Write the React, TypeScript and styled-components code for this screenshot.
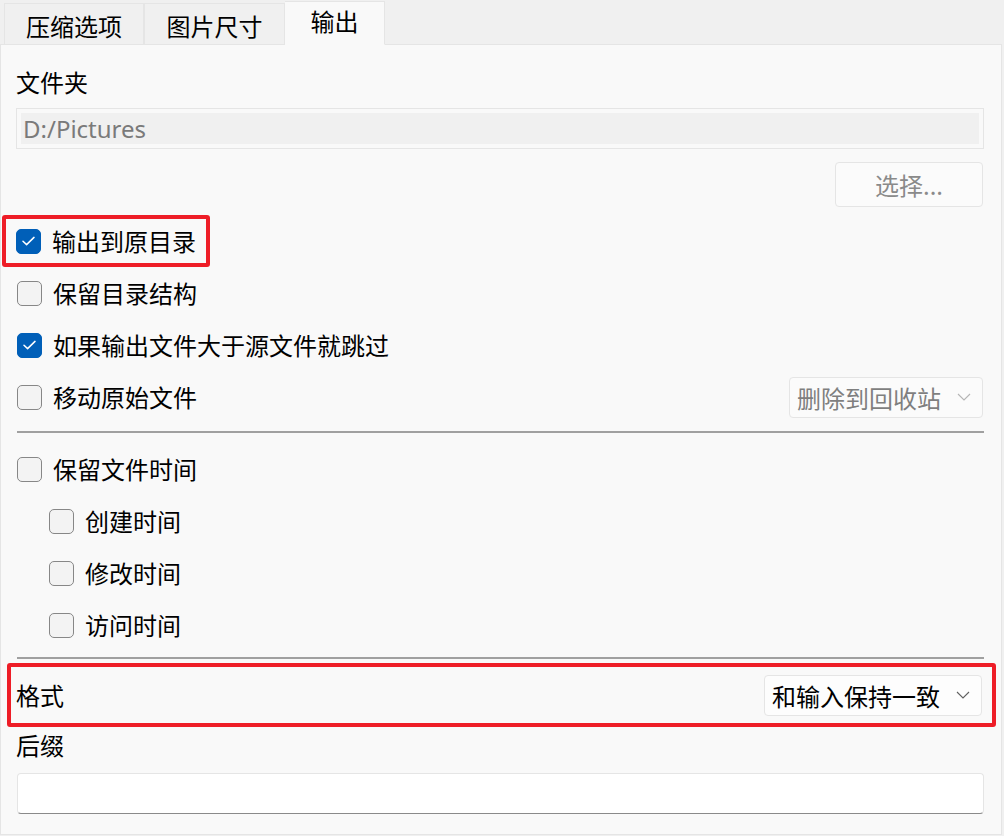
import React from 'react';
import styled, { createGlobalStyle } from 'styled-components';

const GlobalStyle = createGlobalStyle`
  html, body {
    margin: 0;
    padding: 0;
    background: #f0f0f0;
  }
  body {
    font-family: "Noto Sans", "Noto Sans CJK SC", sans-serif;
    color: #000;
  }
`;

const Window = styled.div`
  width: 1004px;
  height: 836px;
  display: flex;
  flex-direction: column;
  background: #f0f0f0;
  font-family: "Noto Sans CJK SC", "Noto Sans", sans-serif;
`;

const TabBar = styled.div`
  display: flex;
  align-items: flex-end;
  height: 44px;
  padding-left: 4px;
  position: relative;
  z-index: 1;
`;

const Tab = styled.div<{ $active?: boolean; $width: number }>`
  box-sizing: border-box;
  width: ${(p) => p.$width}px;
  height: ${(p) => (p.$active ? 44 : 41)}px;
  display: flex;
  align-items: center;
  justify-content: center;
  font-size: 24px;
  background: ${(p) => (p.$active ? '#f9f9f9' : '#f0f0f0')};
  border: 1px solid #e5e5e5;
  border-bottom: ${(p) => (p.$active ? '1px solid #f9f9f9' : 'none')};
  border-left-width: ${(p) => (p.$active ? 0 : 1)}px;
  margin-bottom: ${(p) => (p.$active ? -1 : 0)}px;
  line-height: 1;
  span {
    margin-top: ${(p) => (p.$active ? -4 : 4)}px;
  }
`;

const Panel = styled.div`
  box-sizing: border-box;
  width: 1002px;
  height: 791px;
  background: #f9f9f9;
  border: 1px solid #e5e5e5;
  padding: 0 17px 0 15px;
  display: flex;
  flex-direction: column;
`;

const Label = styled.div<{ $top: number }>`
  font-size: 24px;
  line-height: 30px;
  height: 30px;
  margin-top: ${(p) => p.$top}px;
`;

const ReadOnlyField = styled.div`
  box-sizing: border-box;
  margin-top: 11px;
  height: 41px;
  border: 1px solid #e5e5e5;
  padding: 4px;
  display: flex;
`;

const ReadOnlyInner = styled.div`
  flex: 1;
  background: #f0f0f0;
  color: #7a7a7a;
  font-family: "Noto Sans", "Noto Sans CJK SC", sans-serif;
  font-size: 24px;
  line-height: 31px;
  padding-left: 2px;
`;

const Button = styled.div`
  box-sizing: border-box;
  align-self: flex-end;
  margin-top: 13px;
  margin-right: 1px;
  width: 148px;
  height: 45px;
  border: 1px solid #e5e5e5;
  border-radius: 4px;
  background: #fbfbfb;
  color: #8a8a8a;
  font-size: 24px;
  display: flex;
  align-items: center;
  justify-content: center;
`;

const Highlight = styled.div<{ $mt: number; $ml: number; $mr: number; $pl: number; $pr: number; $fit?: boolean }>`
  box-sizing: border-box;
  border: 4px solid #ee1d27;
  border-radius: 3px;
  margin: ${(p) => `${p.$mt}px ${p.$mr}px 0 ${p.$ml}px`};
  padding: ${(p) => `0 ${p.$pr}px 0 ${p.$pl}px`};
  width: ${(p) => (p.$fit ? 'fit-content' : 'auto')};
`;

const Row = styled.div<{ $h?: number; $indent?: number }>`
  display: flex;
  align-items: center;
  height: ${(p) => p.$h ?? 52}px;
  padding-left: ${(p) => p.$indent ?? 1}px;
`;

const Box = styled.span<{ $checked?: boolean }>`
  box-sizing: border-box;
  width: 25px;
  height: 25px;
  border-radius: 5px;
  flex: none;
  display: flex;
  align-items: center;
  justify-content: center;
  background: ${(p) => (p.$checked ? '#005fb8' : '#f3f3f3')};
  border: 1px solid ${(p) => (p.$checked ? '#005fb8' : '#878787')};
`;

const CheckText = styled.span<{ $gap?: number }>`
  font-size: 24px;
  margin-left: ${(p) => p.$gap ?? 11}px;
  line-height: 30px;
`;

const Spacer = styled.div`
  flex: 1;
`;

const Combo = styled.div<{ $width: number; $disabled?: boolean }>`
  box-sizing: border-box;
  width: ${(p) => p.$width}px;
  height: 41px;
  border: 1px solid #e5e5e5;
  border-radius: 4px;
  background: ${(p) => (p.$disabled ? '#fbfbfb' : '#fdfdfd')};
  color: ${(p) => (p.$disabled ? '#7f7f7f' : '#000')};
  font-size: 24px;
  display: flex;
  align-items: center;
  padding: 0 11px 0 7px;
  margin-right: 1px;
  svg {
    margin-left: auto;
  }
`;

const Divider = styled.div<{ $mt: number }>`
  height: 2px;
  background: #a0a0a0;
  margin-top: ${(p) => p.$mt}px;
  margin-left: 1px;
`;

const TextField = styled.div`
  box-sizing: border-box;
  margin-top: 13px;
  height: 41px;
  background: #ffffff;
  border: 1px solid #e5e5e5;
  border-bottom: 1px solid #8a8a8a;
  border-radius: 4px;
  margin-left: 1px;
`;

const Check = () => (
  <svg width="13" height="10" viewBox="0 0 13 10">
    <path d="M1 5.2 L4.6 8.6 L12 1.4" fill="none" stroke="#fff" strokeWidth="1.5" strokeLinecap="round" strokeLinejoin="round" />
  </svg>
);

const Chevron = ({ color }: { color: string }) => (
  <svg width="14" height="8" viewBox="0 0 14 8">
    <path d="M1 1 L7 7 L13 1" fill="none" stroke={color} strokeWidth="1.1" />
  </svg>
);

const CheckRow = ({ label, checked, indent, children }: { label: string; checked?: boolean; indent?: number; children?: React.ReactNode }) => (
  <Row $indent={indent}>
    <Box $checked={checked}>{checked && <Check />}</Box>
    <CheckText>{label}</CheckText>
    {children}
  </Row>
);

export default function App() {
  return (
    <Window>
      <GlobalStyle />
      <TabBar>
        <Tab $width={140}><span>压缩选项</span></Tab>
        <Tab $width={141}><span>图片尺寸</span></Tab>
        <Tab $width={100} $active><span>输出</span></Tab>
      </TabBar>
      <Panel>
        <Label $top={22}>文件夹</Label>
        <ReadOnlyField>
          <ReadOnlyInner>D:/Pictures</ReadOnlyInner>
        </ReadOnlyField>
        <Button>选择...</Button>
        <Highlight $mt={8} $ml={-14} $mr={0} $pl={10} $pr={10} $fit>
          <Row $h={44} $indent={0}>
            <Box $checked><Check /></Box>
            <CheckText>输出到原目录</CheckText>
          </Row>
        </Highlight>
        <CheckRow label="保留目录结构" />
        <CheckRow label="如果输出文件大于源文件就跳过" checked />
        <CheckRow label="移动原始文件">
          <Spacer />
          <Combo $width={194} $disabled>
            删除到回收站
            <Chevron color="#b5b5b5" />
          </Combo>
        </CheckRow>
        <Divider $mt={8} />
        <Row $h={10} />
        <CheckRow label="保留文件时间" />
        <CheckRow label="创建时间" indent={33} />
        <CheckRow label="修改时间" indent={33} />
        <CheckRow label="访问时间" indent={33} />
        <Divider $mt={6} />
        <Highlight $mt={4} $ml={-9} $mr={-12} $pl={5} $pr={9}>
          <Row $h={56} $indent={0}>
            <CheckText $gap={0}>格式</CheckText>
            <Spacer />
            <Combo $width={218}>
              和输入保持一致
              <Chevron color="#606060" />
            </Combo>
          </Row>
        </Highlight>
        <Label $top={3}>后缀</Label>
        <TextField />
      </Panel>
    </Window>
  );
}
